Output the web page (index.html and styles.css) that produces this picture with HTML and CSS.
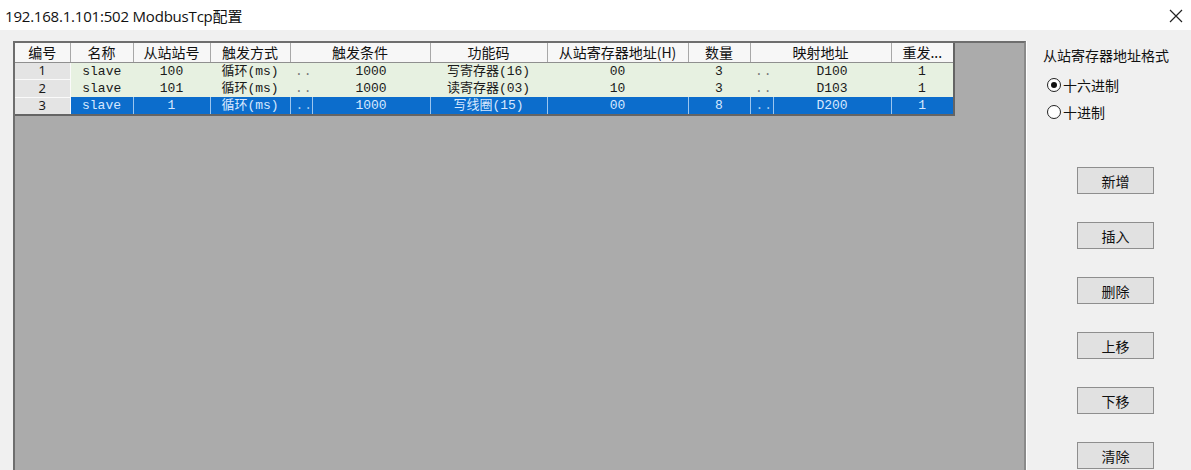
FILE: index.html
```html
<!DOCTYPE html>
<html lang="zh-CN">
<head>
  <meta charset="UTF-8">
  <title>192.168.1.101:502 ModbusTcp配置</title>
  <link rel="stylesheet" href="styles.css">
</head>
<body>
  <div class="titlebar">
    <span class="title">192.168.1.101:502 ModbusTcp配置</span>
    <svg class="close" width="14" height="14" viewBox="0 0 14 14">
      <path d="M1 1 L13 13 M13 1 L1 13" stroke="#222" stroke-width="1.2" fill="none"/>
    </svg>
  </div>

  <div class="dialog">
    <div class="grid-area">
      <table class="grid">
        <colgroup>
          <col style="width:55px"><col style="width:63px"><col style="width:77px"><col style="width:80px">
          <col style="width:22px"><col style="width:118px"><col style="width:117px"><col style="width:141px">
          <col style="width:62px"><col style="width:23px"><col style="width:118px"><col style="width:63px">
        </colgroup>
        <thead>
          <tr>
            <th>编号</th>
            <th>名称</th>
            <th>从站站号</th>
            <th>触发方式</th>
            <th colspan="2">触发条件</th>
            <th>功能码</th>
            <th>从站寄存器地址(H)</th>
            <th>数量</th>
            <th colspan="2">映射地址</th>
            <th>重发...</th>
          </tr>
        </thead>
        <tbody>
          <tr>
            <td class="rowhead">1</td>
            <td>slave</td>
            <td>100</td>
            <td>循环(ms)</td>
            <td class="dots">..</td>
            <td>1000</td>
            <td>写寄存器(16)</td>
            <td>00</td>
            <td>3</td>
            <td class="dots">..</td>
            <td>D100</td>
            <td>1</td>
          </tr>
          <tr>
            <td class="rowhead">2</td>
            <td>slave</td>
            <td>101</td>
            <td>循环(ms)</td>
            <td class="dots">..</td>
            <td>1000</td>
            <td>读寄存器(03)</td>
            <td>10</td>
            <td>3</td>
            <td class="dots">..</td>
            <td>D103</td>
            <td>1</td>
          </tr>
          <tr class="selected">
            <td class="rowhead">3</td>
            <td>slave</td>
            <td>1</td>
            <td>循环(ms)</td>
            <td class="dots">..</td>
            <td>1000</td>
            <td>写线圈(15)</td>
            <td>00</td>
            <td>8</td>
            <td class="dots">..</td>
            <td>D200</td>
            <td>1</td>
          </tr>
        </tbody>
      </table>
    </div>

    <div class="side">
      <div class="side-label">从站寄存器地址格式</div>
      <label class="radio"><span class="dot checked"></span>十六进制</label>
      <label class="radio"><span class="dot"></span>十进制</label>

      <div class="buttons">
        <button class="btn">新增</button>
        <button class="btn">插入</button>
        <button class="btn">删除</button>
        <button class="btn">上移</button>
        <button class="btn">下移</button>
        <button class="btn">清除</button>
      </div>
    </div>
  </div>
</body>
</html>
```

FILE: styles.css
```css
* {
  margin: 0;
  padding: 0;
  box-sizing: border-box;
}

html, body {
  width: 1191px;
  height: 470px;
  overflow: hidden;
}

body {
  font-family: "Noto Sans CJK SC", "Noto Sans", sans-serif;
  background: #f0f0f0;
  color: #000;
}

/* window title */
.titlebar {
  height: 30px;
  background: #fff;
  display: flex;
  align-items: center;
  justify-content: space-between;
  padding: 0 8px 0 5px;
}

.title {
  font-family: "Open Sans", "Noto Sans CJK SC", sans-serif;
  font-size: 15px;
  letter-spacing: -0.2px;
  color: #111;
}

.close {
  margin-top: 1px;
}

.dialog {
  display: flex;
  padding: 11px 0 0 13px;
}

/* data grid */
.grid-area {
  width: 1013px;
  height: 429px;
  background: #ababab;
  border-top: 2px solid #6e6e6e;
  border-left: 2px solid #6e6e6e;
  border-right: 2px solid #8a8a8a;
  box-shadow: 1px 0 0 #fff;
}

.grid {
  border-collapse: collapse;
  table-layout: fixed;
  width: 939px;
  border-right: 2px solid #646464;
  border-bottom: 2px solid #646464;
}

.grid th {
  height: 19px;
  background: #f7f7f7;
  font-weight: normal;
  font-size: 14px;
  line-height: 17px;
  text-align: center;
  color: #111;
  border-right: 1px solid #a8a8a8;
  border-bottom: 1px solid #8f8f8f;
  white-space: nowrap;
  overflow: hidden;
}

.grid tbody tr {
  height: 17.5px;
}

.grid td {
  background: #e7f1e1;
  font-family: "Liberation Mono", "Noto Sans CJK SC", monospace;
  font-size: 13px;
  line-height: 15px;
  text-align: center;
  color: #1a1a1a;
  white-space: nowrap;
  overflow: hidden;
}

.grid td.rowhead {
  background: #e4e4e4;
  border-bottom: 1px solid #fafafa;
  border-right: 1px solid #fafafa;
  font-family: "Noto Sans", sans-serif;
}

.grid td.dots {
  text-align: left;
  padding-left: 5px;
  color: #777;
  letter-spacing: 1px;
}

.grid tr.selected td {
  background: #0c6dcc;
  color: #d6e8ff;
  border-right: 1px solid #9cc6ef;
}

.grid tr.selected td.rowhead {
  background: #e4e4e4;
  color: #1a1a1a;
  border-right: 1px solid #fafafa;
}

.grid tr.selected td.dots {
  color: #a9cdf2;
}

/* right-hand panel */
.side {
  flex: 1;
  display: flex;
  flex-direction: column;
  padding: 4px 0 0 16px;
}

.side-label {
  font-size: 14px;
  color: #111;
  margin-bottom: 6px;
  margin-left: 1px;
}

.radio {
  display: flex;
  align-items: center;
  font-size: 14px;
  color: #111;
  height: 27px;
  padding-left: 5px;
}

.dot {
  width: 14px;
  height: 14px;
  border: 1.6px solid #222;
  border-radius: 50%;
  margin-right: 2px;
  display: flex;
  align-items: center;
  justify-content: center;
  background: #fff;
}

.dot.checked::after {
  content: "";
  width: 6px;
  height: 6px;
  border-radius: 50%;
  background: #111;
}

.buttons {
  display: flex;
  flex-direction: column;
  gap: 28px;
  margin-top: 42px;
  padding-left: 35px;
}

.btn {
  width: 77px;
  height: 27px;
  background: #e1e1e1;
  border: 1px solid #8e8e8e;
  font-family: "Noto Sans CJK SC", sans-serif;
  font-size: 14px;
  color: #111;
}
```
